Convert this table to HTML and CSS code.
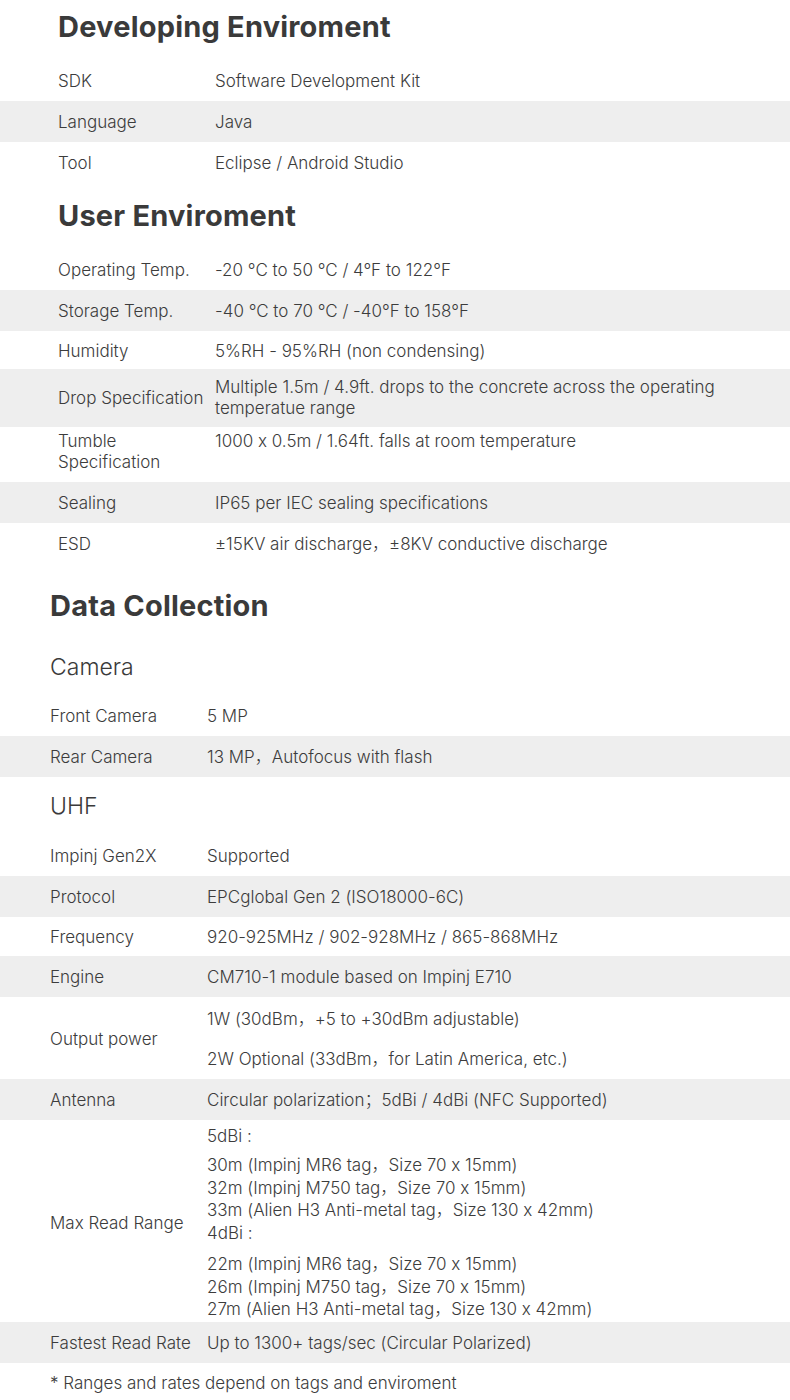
FILE: index.html
```html
<!DOCTYPE html>
<html lang="en">
<head>
<meta charset="utf-8">
<title>Specifications</title>
<link rel="stylesheet" href="styles.css">
</head>
<body>
<main class="page">
  <section class="spec spec--wide">
    <h2 class="spec-title spec-title--first">Developing Enviroment</h2>
    <div class="spec-table">
      <div class="row"><div class="label">SDK</div><div class="value">Software Development Kit</div></div>
      <div class="row"><div class="label">Language</div><div class="value">Java</div></div>
      <div class="row"><div class="label">Tool</div><div class="value">Eclipse / Android Studio</div></div>
    </div>
  </section>

  <section class="spec spec--wide">
    <h2 class="spec-title">User Enviroment</h2>
    <div class="spec-table">
      <div class="row"><div class="label">Operating Temp.</div><div class="value">-20 °C to 50 °C / 4°F to 122°F</div></div>
      <div class="row"><div class="label">Storage Temp.</div><div class="value">-40 °C to 70 °C / -40°F to 158°F</div></div>
      <div class="row row--tight"><div class="label">Humidity</div><div class="value">5%RH - 95%RH (non condensing)</div></div>
      <div class="row row--drop"><div class="label">Drop Specification</div><div class="value">Multiple 1.5m / 4.9ft. drops to the concrete across the operating temperatue range</div></div>
      <div class="row row--top"><div class="label">Tumble Specification</div><div class="value">1000 x 0.5m / 1.64ft. falls at room temperature</div></div>
      <div class="row"><div class="label">Sealing</div><div class="value">IP65 per IEC sealing specifications</div></div>
      <div class="row"><div class="label">ESD</div><div class="value">±15KV air discharge，±8KV conductive discharge</div></div>
    </div>
  </section>

  <section class="spec spec--narrow">
    <h2 class="spec-title spec-title--major">Data Collection</h2>
    <h3 class="spec-sub spec-sub--first">Camera</h3>
    <div class="spec-table">
      <div class="row"><div class="label">Front Camera</div><div class="value">5 MP</div></div>
      <div class="row"><div class="label">Rear Camera</div><div class="value">13 MP，Autofocus with flash</div></div>
    </div>
    <h3 class="spec-sub">UHF</h3>
    <div class="spec-table">
      <div class="row"><div class="label">Impinj Gen2X</div><div class="value">Supported</div></div>
      <div class="row"><div class="label">Protocol</div><div class="value">EPCglobal Gen 2 (ISO18000-6C)</div></div>
      <div class="row row--short"><div class="label">Frequency</div><div class="value">920-925MHz / 902-928MHz / 865-868MHz</div></div>
      <div class="row"><div class="label">Engine</div><div class="value">CM710-1 module based on Impinj E710</div></div>
      <div class="row row--multi">
        <div class="label">Output power</div>
        <div class="value">
          <p class="para para--spaced">1W (30dBm，+5 to +30dBm adjustable)</p>
          <p class="para para--spaced">2W Optional (33dBm，for Latin America, etc.)</p>
        </div>
      </div>
      <div class="row"><div class="label">Antenna</div><div class="value">Circular polarization；5dBi / 4dBi (NFC Supported)</div></div>
      <div class="row row--list">
        <div class="label">Max Read Range</div>
        <div class="value">
          <p class="para">5dBi :</p>
          <p class="para">30m (Impinj MR6 tag，Size 70 x 15mm)<br>32m (Impinj M750 tag，Size 70 x 15mm)<br>33m (Alien H3 Anti-metal tag，Size 130 x 42mm)<br>4dBi :</p>
          <p class="para para--gap">22m (Impinj MR6 tag，Size 70 x 15mm)<br>26m (Impinj M750 tag，Size 70 x 15mm)<br>27m (Alien H3 Anti-metal tag，Size 130 x 42mm)</p>
        </div>
      </div>
      <div class="row"><div class="label">Fastest Read Rate</div><div class="value">Up to 1300+ tags/sec (Circular Polarized)</div></div>
    </div>
    <p class="footnote">* Ranges and rates depend on tags and enviroment</p>
  </section>
</main>
</body>
</html>
```

FILE: styles.css
```css
* { box-sizing: border-box; }

html, body {
  margin: 0;
  padding: 0;
  background: #ffffff;
}

body {
  font-family: Inter, "Noto Sans", "Liberation Sans", "Noto Sans CJK SC", sans-serif;
  font-size: 17px;
  font-weight: 300;
  font-feature-settings: "calt" 0;
  color: #3c3c3c;
}

.page {
  width: 790px;
}

.spec--wide { --indent: 58px; }
.spec--narrow { --indent: 50px; }

.spec-title {
  margin: 13px 0 13px;
  padding-left: var(--indent);
  font-size: 29px;
  line-height: 40px;
  font-weight: 650;
  letter-spacing: 0.2px;
  color: #3a3a3a;
}

.spec-title--first { margin-top: 7px; }
.spec-title--major { margin-top: 22px; margin-bottom: 0; }

.spec-sub {
  margin: 14px 0 14px;
  padding-left: var(--indent);
  font-size: 23px;
  line-height: 30px;
  font-weight: 300;
  color: #3a3a3a;
}

.spec-sub--first { margin-top: 26px; margin-bottom: 13px; }

.spec-table {
  display: flex;
  flex-direction: column;
}

.row {
  display: grid;
  grid-template-columns: 157px 1fr;
  align-items: center;
  padding: 11px 40px 9px var(--indent);
  line-height: 21px;
}

.row:nth-child(even) { background: #eeeeee; }

.row--tight { padding-top: 10px; padding-bottom: 7px; }
.row--short { padding-top: 10px; padding-bottom: 8px; }
.row--drop { padding-top: 8px; padding-bottom: 8px; }
.row--top { align-items: start; padding-top: 4px; padding-bottom: 9px; }
.row--multi { padding-top: 11px; padding-bottom: 9px; }
.row--list { padding-top: 5px; padding-bottom: 1px; }

.label { padding-right: 2px; }

.para {
  margin: 0;
  line-height: 22.75px;
}

.para + .para { margin-top: 6px; }
.para + .para--gap { margin-top: 8px; }

.para--spaced { line-height: 22px; margin: 0; }
.para--spaced + .para--spaced { margin-top: 18px; }

.footnote {
  margin: 10px 0 0;
  padding-left: var(--indent);
  line-height: 21px;
}
```
